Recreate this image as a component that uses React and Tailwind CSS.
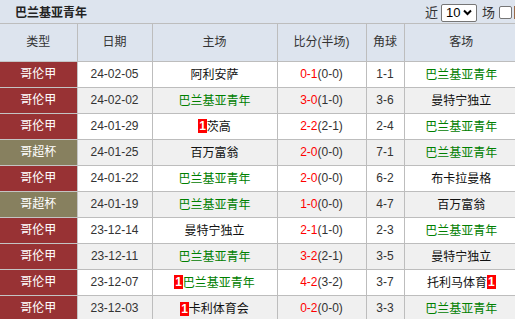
import React from "react"

const rows = [
  { type: "哥伦甲", date: "24-02-05", home: "阿利安萨", score: "0-1", half: "(0-0)", corner: "1-1", away: "巴兰基亚青年", us: "away" },
  { type: "哥伦甲", date: "24-02-02", home: "巴兰基亚青年", score: "3-0", half: "(1-0)", corner: "3-6", away: "曼特宁独立", us: "home" },
  { type: "哥伦甲", date: "24-01-29", home: "茨高", homeRed: 1, score: "2-2", half: "(2-1)", corner: "2-4", away: "巴兰基亚青年", us: "away" },
  { type: "哥超杯", date: "24-01-25", home: "百万富翁", score: "2-0", half: "(0-0)", corner: "7-1", away: "巴兰基亚青年", us: "away" },
  { type: "哥伦甲", date: "24-01-22", home: "巴兰基亚青年", score: "2-0", half: "(0-0)", corner: "6-2", away: "布卡拉曼格", us: "home" },
  { type: "哥超杯", date: "24-01-19", home: "巴兰基亚青年", score: "1-0", half: "(0-0)", corner: "4-7", away: "百万富翁", us: "home" },
  { type: "哥伦甲", date: "23-12-14", home: "曼特宁独立", score: "2-1", half: "(1-0)", corner: "2-3", away: "巴兰基亚青年", us: "away" },
  { type: "哥伦甲", date: "23-12-11", home: "巴兰基亚青年", score: "3-2", half: "(2-1)", corner: "3-5", away: "曼特宁独立", us: "home" },
  { type: "哥伦甲", date: "23-12-07", home: "巴兰基亚青年", homeRed: 1, score: "4-2", half: "(3-2)", corner: "3-7", away: "托利马体育", awayRed: 1, us: "home" },
  { type: "哥伦甲", date: "23-12-03", home: "卡利体育会", homeRed: 1, score: "0-2", half: "(0-0)", corner: "3-3", away: "巴兰基亚青年", us: "away" },
]

function RedCard({ n }) {
  return (
    <span className="inline-block bg-[#ff0000] text-white font-bold text-[12px] leading-[14px] px-[1px] align-middle">
      {n}
    </span>
  )
}

function Team({ name, red, redAfter, green }) {
  return (
    <span className={green ? "text-[#008000]" : "text-[#111]"}>
      {red && !redAfter ? <RedCard n={red} /> : null}
      <span className="align-middle">{name}</span>
      {red && redAfter ? <RedCard n={red} /> : null}
    </span>
  )
}

function App() {
  return (
    <div
      className="w-[515px] h-[319px] overflow-hidden bg-[#dde4ee] text-[12px]"
      style={{ fontFamily: '"Liberation Sans", "Noto Sans CJK SC", sans-serif' }}
    >
      <div className="h-[24px] flex items-center justify-between border-b border-[#bdbdbd] pl-[15px] pt-[2px]">
        <span className="font-bold text-[#222]">巴兰基亚青年</span>
        <div className="flex items-center text-[#333] text-[13px]">
          <span>近</span>
          <div className="ml-[3px] w-[36px] h-[18px] bg-white border border-[#767676] rounded-[2px] flex items-center justify-between px-[4px] text-[13px] text-black">
            <span>10</span>
            <svg width="9" height="7" viewBox="0 0 9 7">
              <path d="M1 1.5 L4.5 5 L8 1.5" stroke="#000" strokeWidth="2" fill="none" />
            </svg>
          </div>
          <span className="ml-[5px]">场</span>
          <span className="ml-[4px] w-[13px] h-[13px] bg-white border border-[#767676] rounded-[2px]"></span>
          <span className="ml-[2px] w-[4px] h-[13px] bg-[#9a6b4a] mr-[-3px]"></span>
        </div>
      </div>
      <table className="table-fixed border-collapse w-[518px] text-center">
        <colgroup>
          <col className="w-[77px]" />
          <col className="w-[75px]" />
          <col className="w-[125px]" />
          <col className="w-[89px]" />
          <col className="w-[38px]" />
          <col className="w-[114px]" />
        </colgroup>
        <thead>
          <tr className="h-[37px] text-[#333]">
            <th className="font-normal border-r border-[#bdbdbd]">类型</th>
            <th className="font-normal border-r border-[#bdbdbd]">日期</th>
            <th className="font-normal border-r border-[#bdbdbd]">主场</th>
            <th className="font-normal border-r border-[#bdbdbd]">比分(半场)</th>
            <th className="font-normal border-r border-[#bdbdbd]">角球</th>
            <th className="font-normal">客场</th>
          </tr>
        </thead>
        <tbody>
          {rows.map(function (r, i) {
            const bg = i % 2 === 0 ? "bg-white" : "bg-[#f0f0f0]"
            const typeBg = r.type === "哥超杯" ? "bg-[#87805f]" : "bg-[#983234]"
            return (
              <tr key={i} className={"h-[26px] " + bg}>
                <td className={"text-white border-t border-r border-[#c4c4c4] " + typeBg}>{r.type}</td>
                <td className="text-[#333] border-t border-r border-[#bdbdbd]">{r.date}</td>
                <td className="border-t border-r border-[#bdbdbd]">
                  <Team name={r.home} red={r.homeRed} green={r.us === "home"} />
                </td>
                <td className="border-t border-r border-[#bdbdbd] text-[#333]">
                  <span className="text-[#ff0000]">{r.score}</span>
                  {r.half}
                </td>
                <td className="text-[#333] border-t border-r border-[#bdbdbd]">{r.corner}</td>
                <td className="border-t border-[#bdbdbd]">
                  <Team name={r.away} red={r.awayRed} redAfter green={r.us === "away"} />
                </td>
              </tr>
            )
          })}
        </tbody>
      </table>
    </div>
  )
}

export default App
